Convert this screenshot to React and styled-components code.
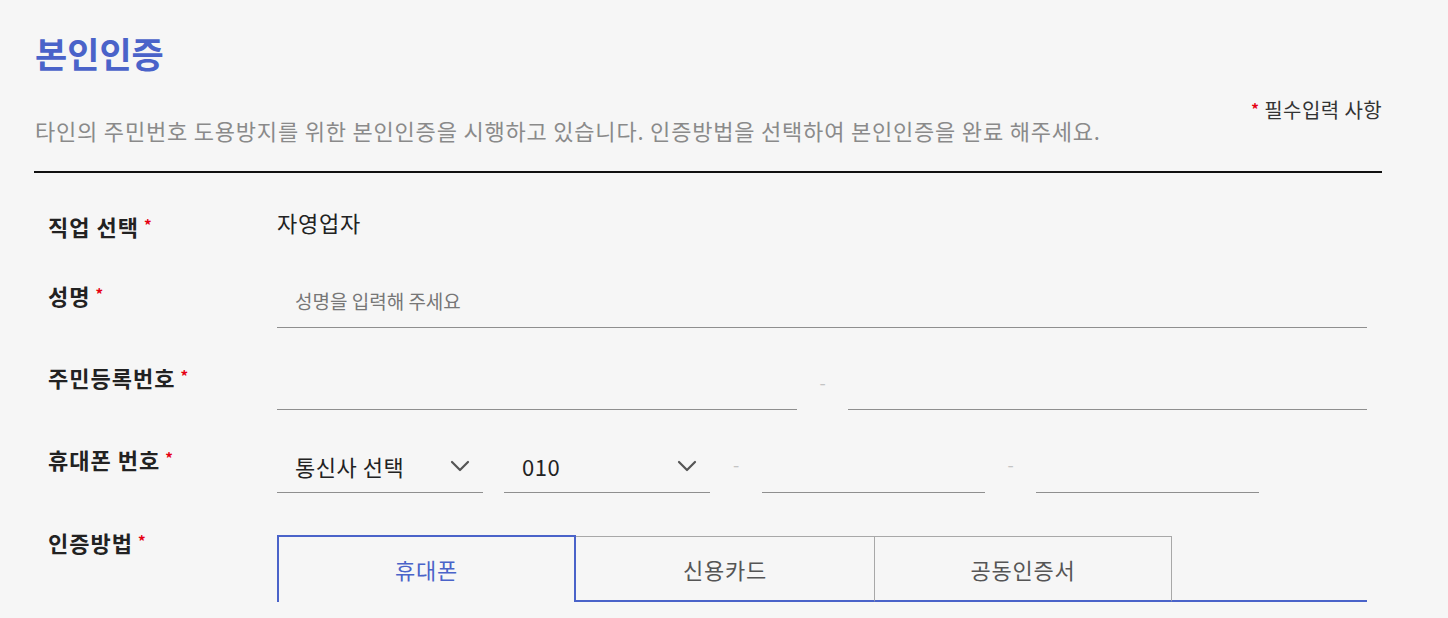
import React, { useState } from "react";
import styled, { createGlobalStyle } from "styled-components";

const GlobalStyle = createGlobalStyle`
  html, body {
    margin: 0;
    padding: 0;
    background: #f6f6f6;
  }
  body {
    font-family: "Noto Sans CJK KR", "Noto Sans", sans-serif;
    color: #222;
  }
  * { box-sizing: border-box; }
`;

const Page = styled.div`
  width: 1448px;
  height: 618px;
  overflow: hidden;
  padding: 28px 0 0 34px;
`;

const Container = styled.div`
  width: 1348px;
`;

const Title = styled.h2`
  margin: 0;
  font-size: 35px;
  font-weight: 700;
  line-height: 50px;
  color: #4a63c9;
  padding-left: 1px;
`;

const HeadRow = styled.div`
  display: flex;
  justify-content: space-between;
  align-items: flex-end;
  margin-top: 19px;
  padding: 0 0 26px 1px;
  border-bottom: 2px solid #111;
`;

const Desc = styled.p`
  margin: 0;
  font-size: 22px;
  line-height: 30px;
  color: #8a8a8a;
  letter-spacing: 0.8px;
`;

const Required = styled.span`
  font-size: 20px;
  color: #333;
  line-height: 26px;
  letter-spacing: 0.4px;
  margin-bottom: 22px;
`;

const Star = styled.span`
  color: #e60012;
  font-size: 15px;
  font-weight: 700;
  margin: 0 5px;
  vertical-align: top;
  position: relative;
  top: ${(p) => (p.$sub ? "-1px" : "-1px")};
`;

const Form = styled.div`
  display: flex;
  flex-direction: column;
  padding-top: 40px;
`;

const Row = styled.div`
  display: flex;
  align-items: flex-start;
  margin-bottom: ${(p) => p.$gap}px;
`;

const Label = styled.div`
  flex: 0 0 243px;
  padding-left: 14px;
  font-size: 22px;
  font-weight: 700;
  line-height: 26px;
  color: #222;
  letter-spacing: 1px;
`;

const Field = styled.div`
  flex: 0 0 1090px;
  display: flex;
  align-items: flex-start;
`;

const Value = styled.div`
  font-size: 22px;
  line-height: 18px;
  color: #222;
  letter-spacing: 0.8px;
`;

const Input = styled.input`
  width: ${(p) => p.$w}px;
  height: ${(p) => p.$h || 46}px;
  border: none;
  border-bottom: 1px solid #8f8f8f;
  background: transparent;
  padding: 0 18px 8px;
  font-family: inherit;
  font-size: 19px;
  color: #222;
  outline: none;
  &::placeholder {
    color: #777;
  }
`;

const Dash = styled.span`
  flex: 0 0 ${(p) => p.$w}px;
  text-align: center;
  color: #c4c4c4;
  font-size: 18px;
  line-height: 36px;
`;

const Select = styled.div`
  width: 206px;
  height: 47px;
  display: flex;
  align-items: center;
  justify-content: space-between;
  padding: 0 13px 6px 18px;
  border-bottom: 1px solid #8f8f8f;
  font-size: 22px;
  color: #222;
  letter-spacing: 0.5px;
  cursor: pointer;
`;

const Tabs = styled.div`
  display: flex;
  margin-top: 6px;
  width: 1090px;
`;

const Tab = styled.button`
  flex: 0 0 ${(p) => p.$w}px;
  height: 67px;
  background: transparent;
  font-family: inherit;
  font-size: 22px;
  letter-spacing: 0.8px;
  cursor: pointer;
  padding: 0;
  color: ${(p) => (p.$active ? "#4a63c9" : "#555")};
  border: none;
  ${(p) =>
    p.$active
      ? `border-top: 2px solid #4a63c9;
         border-left: 2px solid #4a63c9;
         border-right: 2px solid #4a63c9;
         padding-bottom: 2px;`
      : `margin-top: 1px;
         height: 66px;
         border-top: 1px solid #a8a8a8;
         border-right: 1px solid #a8a8a8;
         border-bottom: 2px solid #4a63c9;`}
`;

const TabFill = styled.div`
  flex: 1;
  height: 67px;
  border-bottom: 2px solid #4a63c9;
`;

function Chevron() {
  return (
    <svg width="20" height="12" viewBox="0 0 20 12" fill="none">
      <polyline points="2,2 10,10 18,2" stroke="#555" strokeWidth="2.2" strokeLinecap="round" strokeLinejoin="round" />
    </svg>
  );
}

const tabs = [
  { name: "휴대폰", w: 299 },
  { name: "신용카드", w: 299 },
  { name: "공동인증서", w: 297 },
];

export default function App() {
  const [tab, setTab] = useState(0);
  return (
    <>
      <GlobalStyle />
      <Page>
        <Container>
          <Title>본인인증</Title>
          <HeadRow>
            <Desc>타인의 주민번호 도용방지를 위한 본인인증을 시행하고 있습니다. 인증방법을 선택하여 본인인증을 완료 해주세요.</Desc>
            <Required>
              <Star $sub>*</Star>필수입력 사항
            </Required>
          </HeadRow>

          <Form>
            <Row $gap={43}>
              <Label>직업 선택<Star>*</Star></Label>
              <Field>
                <Value>자영업자</Value>
              </Field>
            </Row>

            <Row $gap={36}>
              <Label>성명<Star>*</Star></Label>
              <Field>
                <Input $w={1090} placeholder="성명을 입력해 주세요" />
              </Field>
            </Row>

            <Row $gap={36}>
              <Label>주민등록번호<Star>*</Star></Label>
              <Field>
                <Input $w={520} />
                <Dash $w={51}>-</Dash>
                <Input $w={519} type="password" />
              </Field>
            </Row>

            <Row $gap={36}>
              <Label>휴대폰 번호<Star>*</Star></Label>
              <Field>
                <Select>
                  <span>통신사 선택</span>
                  <Chevron />
                </Select>
                <Dash $w={21} />
                <Select>
                  <span>010</span>
                  <Chevron />
                </Select>
                <Dash $w={52}>-</Dash>
                <Input $w={223} $h={47} />
                <Dash $w={51}>-</Dash>
                <Input $w={223} $h={47} />
              </Field>
            </Row>

            <Row $gap={0}>
              <Label>인증방법<Star>*</Star></Label>
              <Field>
                <Tabs>
                  {tabs.map((t, i) => (
                    <Tab key={t.name} $w={t.w} $active={tab === i} onClick={() => setTab(i)}>
                      {t.name}
                    </Tab>
                  ))}
                  <TabFill />
                </Tabs>
              </Field>
            </Row>
          </Form>
        </Container>
      </Page>
    </>
  );
}
